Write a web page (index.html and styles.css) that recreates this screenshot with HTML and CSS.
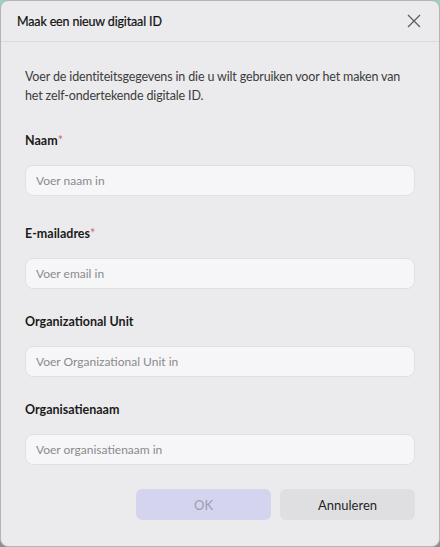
FILE: index.html
```html
<!DOCTYPE html>
<html lang="nl">
  <head>
    <meta charset="UTF-8" />
    <meta name="viewport" content="width=device-width, initial-scale=1.0" />
    <title>Maak een nieuw digitaal ID</title>
    <link rel="stylesheet" href="styles.css">
  </head>
  <body>
    <div class="dialog">
      <div class="dialog-header">
        <span class="dialog-title">Maak een nieuw digitaal ID</span>
        <button class="close" aria-label="Sluiten">
          <svg width="14" height="14" viewBox="0 0 14 14">
            <path d="M1 1 L13 13 M13 1 L1 13" stroke="#5a5a5a" stroke-width="1.2" fill="none" />
          </svg>
        </button>
      </div>

      <div class="dialog-body">
        <p class="intro">
          Voer de identiteitsgegevens in die u wilt gebruiken voor het maken van
          het zelf-ondertekende digitale ID.
        </p>

        <div class="field first">
          <label for="naam">Naam<span class="star">*</span></label>
          <input type="text" id="naam" placeholder="Voer naam in" />
        </div>
        <div class="field">
          <label for="email">E-mailadres<span class="star">*</span></label>
          <input type="text" id="email" placeholder="Voer email in" />
        </div>
        <div class="field">
          <label for="unit">Organizational Unit</label>
          <input type="text" id="unit" placeholder="Voer Organizational Unit in" />
        </div>
        <div class="field">
          <label for="org">Organisatienaam</label>
          <input type="text" id="org" placeholder="Voer organisatienaam in" />
        </div>

        <div class="actions">
          <button class="btn btn-ok" disabled>OK</button>
          <button class="btn">Annuleren</button>
        </div>
      </div>
    </div>
  </body>
</html>
```

FILE: styles.css
```css
html {
  background: linear-gradient(to bottom, #9ccfc6, #b9c4c2 20%, #8a8f92);
}
body {
  margin: 0;
  font-family: "Segoe UI", Lato, "Noto Sans", sans-serif;
  color: #1b1b1b;
}
.dialog {
  box-sizing: border-box;
  width: 440px;
  height: 547px;
  background: #ebebed;
  border: 1px solid #b4b4b6;
  border-radius: 8px;
  overflow: hidden;
}
.dialog-header {
  height: 40px;
  display: flex;
  align-items: center;
  justify-content: space-between;
  padding: 0 8px 0 16px;
  border-bottom: 1px solid #dcdcde;
}
.dialog-title {
  font-size: 12.5px;
  letter-spacing: -0.15px;
  padding-top: 1px;
  color: #111;
  -webkit-text-stroke: 0.2px #111;
}
.close {
  width: 28px;
  height: 28px;
  border: none;
  background: none;
  padding: 0;
  display: flex;
  align-items: center;
  justify-content: center;
  margin-right: 3px;
}
.dialog-body {
  padding: 25px 24px 0;
}
.intro {
  margin: 0 0 27px;
  font-size: 12.5px;
  letter-spacing: -0.15px;
  line-height: 19px;
  color: #3c3c3c;
}
.field {
  margin-bottom: 24px;
}
.field.first {
  margin-bottom: 29px;
}
.field label {
  display: block;
  font-size: 12.5px;
  font-weight: 700;
  line-height: 18px;
  margin-bottom: 15px;
}
.star {
  color: #d06a6a;
  font-weight: 400;
}
.field input {
  box-sizing: border-box;
  width: 100%;
  height: 31px;
  border: 1px solid #e0e0e2;
  border-radius: 8px;
  background: #f6f6f8;
  padding: 0 10px;
  font-family: inherit;
  font-size: 12px;
  color: #1b1b1b;
}
.field input::placeholder {
  color: #8a8a8c;
}
.actions {
  display: flex;
  justify-content: flex-end;
  gap: 9px;
  margin-top: 2px;
}
.btn {
  width: 135px;
  height: 31px;
  border: none;
  border-radius: 6px;
  background: #dfdfe1;
  font-family: inherit;
  font-size: 13px;
  color: #1f1f1f;
}
.btn-ok {
  background: #d4d4ef;
  color: #9c9cb4;
}
```
